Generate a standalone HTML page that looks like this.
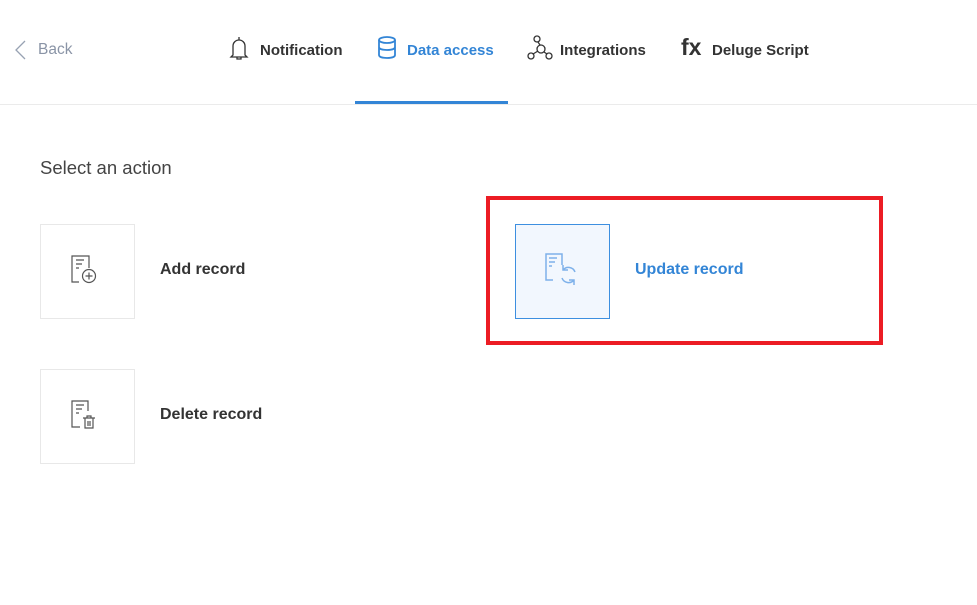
<!DOCTYPE html>
<html><head><style>
*{margin:0;padding:0;box-sizing:border-box}
body{width:977px;height:605px;background:#fff;font-family:"Liberation Sans",sans-serif;position:relative;overflow:hidden}
.a{position:absolute}
.t{font-size:15px;font-weight:bold;color:#333;white-space:nowrap}
.b{font-size:16px;font-weight:bold;color:#333;white-space:nowrap}
.box{position:absolute;width:95px;height:95px;border:1px solid #e8e8e8;background:#fff}
</style></head><body>
<div class="a" style="left:0;top:104px;width:977px;height:1px;background:#ebebeb"></div>
<div class="a" style="left:355px;top:101px;width:153px;height:3px;background:#3385d6"></div>
<svg class="a" style="left:13px;top:40px" width="14" height="20"><path d="M12 1 L3 10 L12 19" fill="none" stroke="#98a2b3" stroke-width="1.3"/></svg>
<div class="a" style="left:38px;top:41px;font-size:15.5px;color:#8a94a6">Back</div>
<svg class="a" style="left:228px;top:35px" width="22" height="26"><path d="M11 2v3M5 20V11a6 6 0 0112 0v9l2 2H3l2-2zM9 22v2h4v-2" fill="none" stroke="#333" stroke-width="1.3"/></svg>
<div class="a t" style="left:260px;top:42px">Notification</div>
<svg class="a" style="left:376px;top:35px" width="22" height="26"><g fill="none" stroke="#3385d6" stroke-width="1.8"><ellipse cx="11" cy="5" rx="8" ry="3"/><path d="M3 5v15c0 2 3.5 3 8 3s8-1 8-3V5M3 12c0 2 3.5 3 8 3s8-1 8-3"/></g></svg>
<div class="a t" style="left:407px;top:42px;color:#3385d6">Data access</div>
<svg class="a" style="left:527px;top:35px" width="26" height="26"><g fill="none" stroke="#333" stroke-width="1.3"><circle cx="10" cy="4" r="3"/><circle cx="14" cy="14" r="4"/><circle cx="4" cy="21" r="3"/><circle cx="22" cy="21" r="3"/><path d="M11 7l2 3M11 16l-5 3M17 17l3 2"/></g></svg>
<div class="a t" style="left:560px;top:42px">Integrations</div>
<div class="a" style="left:681px;top:34px;font-size:23px;font-weight:bold;color:#333">fx</div>
<div class="a t" style="left:712px;top:42px">Deluge Script</div>
<div class="a" style="left:40px;top:157px;font-size:18.5px;color:#444">Select an action</div>
<div class="box" style="left:40px;top:224px"></div>
<svg class="a" style="left:68px;top:252px" width="36" height="36"><g fill="none" stroke="#555" stroke-width="1.2"><path d="M21 16V4H4v26h7M8 8h8M8 12h6M8 16h3"/><circle cx="21" cy="24" r="6.5"/><path d="M21 20.5v7M17.5 24h7"/></g></svg>
<div class="a b" style="left:160px;top:261px">Add record</div>
<div class="box" style="left:40px;top:369px"></div>
<svg class="a" style="left:68px;top:397px" width="36" height="36"><g fill="none" stroke="#555" stroke-width="1.2"><path d="M20 14V4H4v26h8M8 8h8M8 12h6M8 16h3"/><path d="M15 21h12M19 21v-2h4v2M17 21v10h8V21M20 24v5M22 24v5"/></g></svg>
<div class="a b" style="left:160px;top:406px">Delete record</div>
<div class="a" style="left:486px;top:196px;width:397px;height:149px;border:4px solid #ec1c24"></div>
<div class="box" style="left:515px;top:224px;border-color:#3d8fe0;background:#f2f7fe"></div>
<svg class="a" style="left:542px;top:252px" width="38" height="38"><g fill="none" stroke="#7eb1ea" stroke-width="1.5"><path d="M20 13V2H4v26h7M7 6h8M7 10h6M7 14h3"/><path d="M33 20a7 7 0 00-12-2M20 26a7 7 0 0012 2M21 13v5h5M32 33v-5h-5"/></g></svg>
<div class="a b" style="left:635px;top:261px;color:#3385d6">Update record</div>
</body></html>
